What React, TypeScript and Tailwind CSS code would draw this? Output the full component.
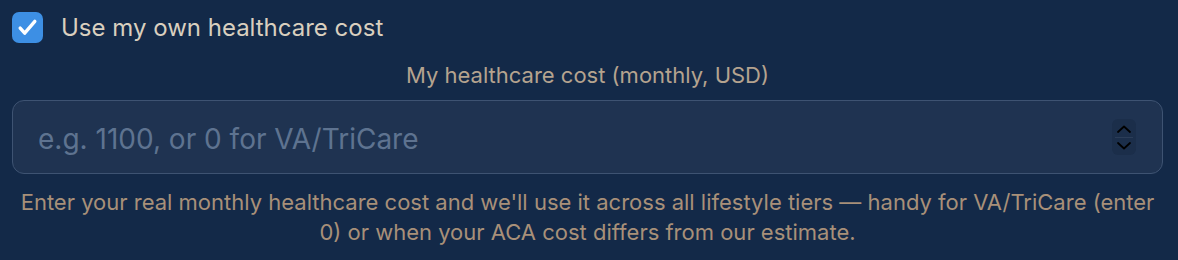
import { useState } from "react";

export default function App() {
  const [own, setOwn] = useState(true);
  const [cost, setCost] = useState("");

  return (
    <main className="min-h-[260px] w-full bg-[#132948] px-3 pt-[12px] font-['Inter',sans-serif]">
      {/* Toggle */}
      <label className="flex items-center gap-[18px] cursor-pointer select-none">
        <span
          className={`flex h-[31px] w-[31px] items-center justify-center rounded-[7px] ${
            own ? "bg-[#3d8fe4]" : "bg-[#1f3452] border border-[#4a5d79]"
          }`}
          onClick={() => setOwn(!own)}
        >
          {own && (
            <svg viewBox="0 0 24 24" className="h-[27px] w-[27px]" fill="none" stroke="white" strokeWidth="3" strokeLinecap="round" strokeLinejoin="round">
              <path d="M5.5 12.5l4 4.5L18.5 6.5" />
            </svg>
          )}
        </span>
        <span className="text-[24px] leading-[30px] text-[#d9cfbf]">Use my own healthcare cost</span>
      </label>

      {/* Cost input */}
      <div className="mt-[18px] flex flex-col mr-[3px]">
        <span className="text-center text-[22px] leading-[28px] text-[#b5a38f]">
          My healthcare cost (monthly, USD)
        </span>
        <div className="relative mt-[11px]">
          <input
            type="text"
            inputMode="numeric"
            value={cost}
            onChange={(e) => setCost(e.target.value)}
            placeholder="e.g. 1100, or 0 for VA/TriCare"
            className="h-[74px] w-full rounded-[12px] border border-[#3e5372] bg-[#1f3351] px-[25px] pt-[4px] text-[28px] text-[#d9cfbf] placeholder:text-[#5e7390] outline-none"
          />
          <div className="absolute right-[27px] top-[19px] flex h-[36px] w-[24px] flex-col items-center justify-center rounded-[6px] bg-[#1b2e4a]">
            <svg viewBox="0 0 16 8" className="h-[8px] w-[16px]" fill="none" stroke="#000" strokeWidth="1.8" strokeLinecap="round" strokeLinejoin="round">
              <path d="M2 7l6-5.5L14 7" />
            </svg>
            <div className="my-[4px] h-px w-[18px] bg-[#2b3d58]" />
            <svg viewBox="0 0 16 8" className="h-[8px] w-[16px]" fill="none" stroke="#000" strokeWidth="1.8" strokeLinecap="round" strokeLinejoin="round">
              <path d="M2 1l6 5.5L14 1" />
            </svg>
          </div>
        </div>
        <p className="mt-[13px] text-center text-[22px] leading-[30px] text-[#a89079]">
          Enter your real monthly healthcare cost and we'll use it across all lifestyle tiers — handy for VA/TriCare (enter 0) or when your ACA cost differs from our estimate.
        </p>
      </div>
    </main>
  );
}
